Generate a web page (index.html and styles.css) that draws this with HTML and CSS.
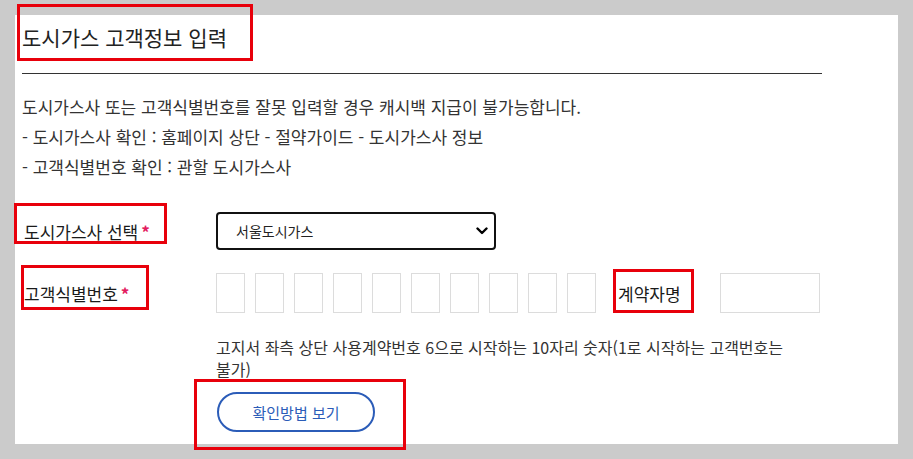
FILE: index.html
```html
<!DOCTYPE html>
<html lang="ko">
<head>
<meta charset="utf-8">
<title>도시가스 고객정보 입력</title>
<link rel="stylesheet" href="styles.css">
</head>
<body>
<div class="page">
  <div class="panel">
    <h2 class="title">도시가스 고객정보 입력</h2>
    <div class="rule"></div>
    <div class="notice">
      <p>도시가스사 또는 고객식별번호를 잘못 입력할 경우 캐시백 지급이 불가능합니다.</p>
      <p>- 도시가스사 확인 : 홈페이지 상단 - 절약가이드 - 도시가스사 정보</p>
      <p>- 고객식별번호 확인 : 관할 도시가스사</p>
    </div>
    <div class="row row-select">
      <label class="label">도시가스사 선택<span class="req">*</span></label>
      <div class="select-wrap">
        <select class="select">
          <option>서울도시가스</option>
        </select>
        <svg class="chev" width="12" height="8" viewBox="0 0 12 8"><path d="M1.5 1.5 L6 6 L10.5 1.5" fill="none" stroke="#000" stroke-width="2.4" stroke-linecap="round" stroke-linejoin="round"/></svg>
      </div>
    </div>
    <div class="row row-id">
      <label class="label">고객식별번호<span class="req">*</span></label>
      <div class="digits">
        <input class="digit" type="text" maxlength="1">
        <input class="digit" type="text" maxlength="1">
        <input class="digit" type="text" maxlength="1">
        <input class="digit" type="text" maxlength="1">
        <input class="digit" type="text" maxlength="1">
        <input class="digit" type="text" maxlength="1">
        <input class="digit" type="text" maxlength="1">
        <input class="digit" type="text" maxlength="1">
        <input class="digit" type="text" maxlength="1">
        <input class="digit" type="text" maxlength="1">
      </div>
      <label class="label name-label">계약자명</label>
      <input class="name" type="text">
    </div>
    <p class="help">고지서 좌측 상단 사용계약번호 6으로 시작하는 10자리 숫자(1로 시작하는 고객번호는 불가)</p>
    <div class="btn-row">
      <button class="btn" type="button">확인방법 보기</button>
    </div>
  </div>
</div>
<div class="mark mark-title"></div>
<div class="mark mark-gas"></div>
<div class="mark mark-id"></div>
<div class="mark mark-name"></div>
<div class="mark mark-btn"></div>
</body>
</html>
```
FILE: styles.css
```css
* { box-sizing: border-box; }
html, body { margin: 0; padding: 0; }
body {
  background: #cbcbcb;
  font-family: "Noto Sans CJK KR", "Noto Sans", sans-serif;
  color: #333;
  position: relative;
  width: 913px;
  height: 459px;
  overflow: hidden;
  word-break: keep-all;
}
.page {
  padding: 15px;
  height: 459px;
}
.panel {
  background: #fff;
  height: 100%;
  padding: 7px 0 0 7px;
}
.title {
  margin: 0;
  font-size: 21px;
  font-weight: 400;
  line-height: 30px;
  color: #222;
}
.rule {
  margin-top: 21px;
  width: 800px;
  border-top: 1px solid #333;
}
.notice { margin-top: 18px; }
.notice p {
  margin: 0;
  font-size: 17px;
  line-height: 30px;
  color: #333;
}
.row {
  display: flex;
  align-items: center;
}
.row-select { margin-top: 30px; height: 38px; }
.row-id { margin-top: 23px; height: 40px; }
.label {
  width: 194px;
  padding-left: 2px;
  font-size: 17px;
  font-weight: 400;
  color: #1a1a1a;
  flex: none;
}
.req {
  color: #e31c5f;
  font-weight: 700;
  margin-left: 3px;
}
.select-wrap {
  position: relative;
  width: 280px;
  height: 38px;
}
.select {
  appearance: none;
  -webkit-appearance: none;
  width: 100%;
  height: 100%;
  border: 2px solid #111;
  border-radius: 4px;
  background: #fff;
  padding: 0 30px 0 18px;
  font-family: inherit;
  font-size: 14px;
  color: #222;
}
.chev {
  position: absolute;
  right: 8px;
  top: 15px;
}
.digits {
  display: flex;
  gap: 10px;
}
.digit {
  width: 29px;
  height: 40px;
  border: 1px solid #dcdcdc;
  padding: 0;
  margin: 0;
  outline: none;
}
.name-label {
  width: 66px;
  margin-left: 22px;
  padding-left: 0;
  white-space: nowrap;
}
.name {
  width: 100px;
  height: 40px;
  margin-left: 36px;
  border: 1px solid #dcdcdc;
  padding: 0;
  outline: none;
}
.help {
  margin: 23px 0 0 194px;
  width: 606px;
  font-size: 16px;
  line-height: 22px;
  color: #333;
}
.btn-row {
  margin: 12px 0 0 195px;
}
.btn {
  width: 158px;
  height: 40px;
  border: 2px solid #2b5cb8;
  border-radius: 20px;
  background: #fff;
  color: #2b5cb8;
  font-family: inherit;
  font-size: 15px;
  padding: 0;
}
.mark {
  position: absolute;
  border: 3px solid #e8000b;
}
.mark-title { left: 17px; top: 4px; width: 236px; height: 57px; }
.mark-gas { left: 14px; top: 203px; width: 153px; height: 41px; }
.mark-id { left: 21px; top: 265px; width: 128px; height: 45px; }
.mark-name { left: 613px; top: 269px; width: 81px; height: 44px; }
.mark-btn { left: 194px; top: 379px; width: 212px; height: 71px; }
```
